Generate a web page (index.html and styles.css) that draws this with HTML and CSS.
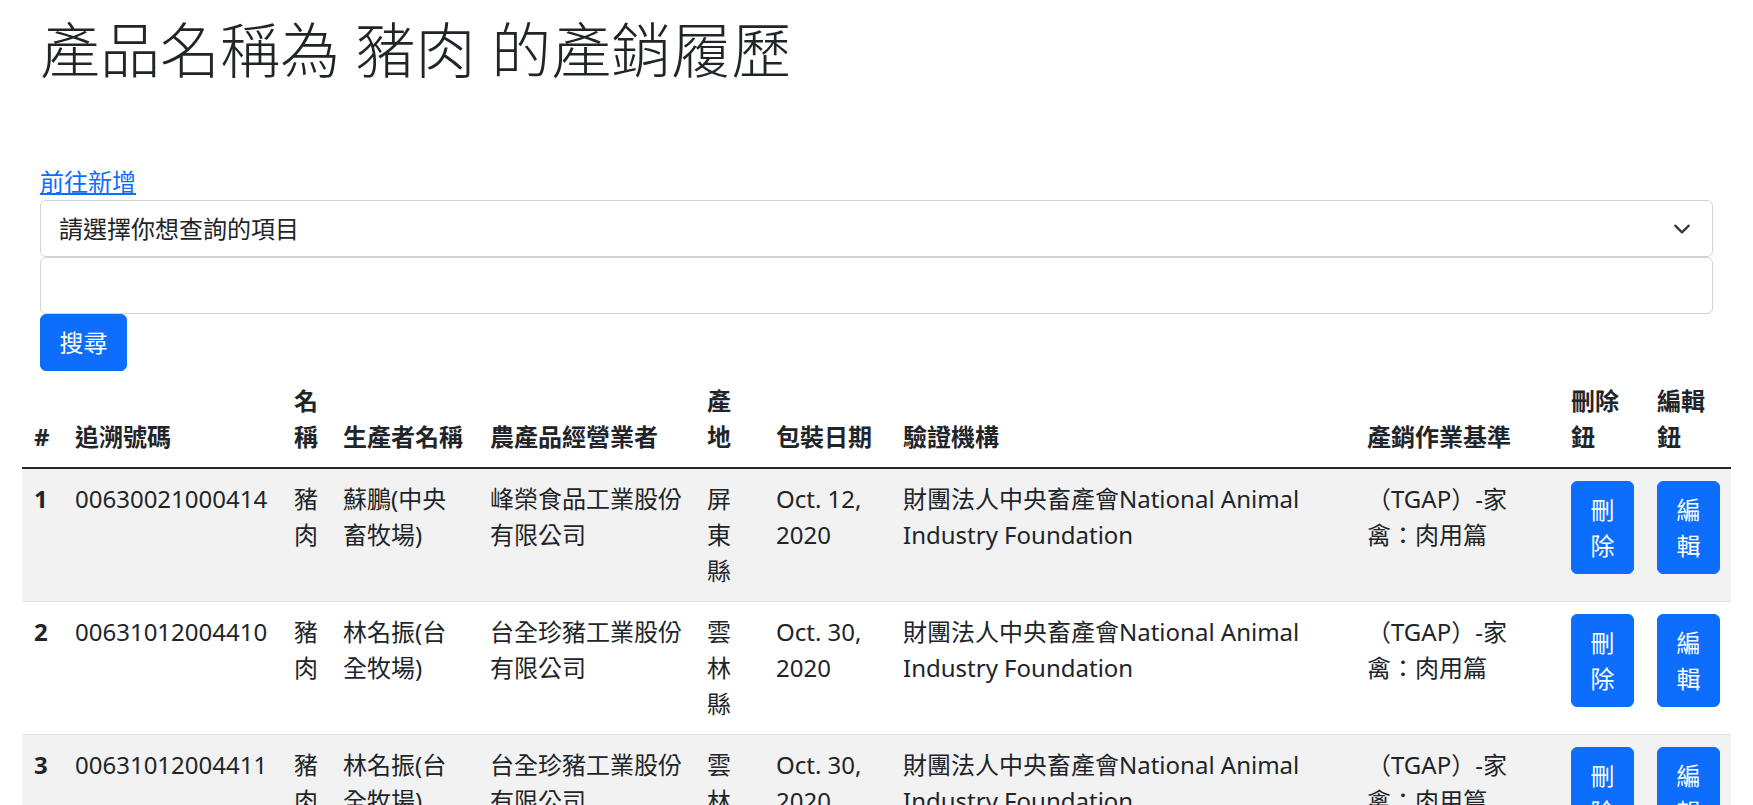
FILE: index.html
```html
<!DOCTYPE html>
<html lang="zh-Hant">
<head>
<meta charset="utf-8">
<title>產銷履歷</title>
<link rel="stylesheet" href="styles.css">
</head>
<body>
<div class="page">
  <div class="head-area">
    <h1 class="title">產品名稱為 豬肉 的產銷履歷</h1>
    <a class="add-link" href="#">前往新增</a>
    <select class="form-select">
      <option>請選擇你想查詢的項目</option>
    </select>
    <input class="form-input" type="text">
    <button class="btn btn-search" type="button">搜尋</button>
  </div>
  <table class="data-table">
    <colgroup>
      <col class="c-no"><col class="c-code"><col class="c-name"><col class="c-prod"><col class="c-biz"><col class="c-origin"><col class="c-date"><col class="c-cert"><col class="c-std"><col class="c-del"><col class="c-edit">
    </colgroup>
    <thead>
      <tr>
        <th>#</th><th>追溯號碼</th><th>名稱</th><th>生產者名稱</th><th>農產品經營業者</th><th>產地</th><th>包裝日期</th><th>驗證機構</th><th>產銷作業基準</th><th>刪除鈕</th><th>編輯鈕</th>
      </tr>
    </thead>
    <tbody>
      <tr class="odd">
        <th>1</th><td>00630021000414</td><td>豬肉</td><td>蘇鵬(中央畜牧場)</td><td>峰榮食品工業股份有限公司</td><td>屏東縣</td><td>Oct. 12, 2020</td><td>財團法人中央畜產會National Animal Industry Foundation</td><td>（TGAP）-家禽：肉用篇</td><td><button class="btn btn-row" type="button">刪除</button></td><td><button class="btn btn-row" type="button">編輯</button></td>
      </tr>
      <tr>
        <th>2</th><td>00631012004410</td><td>豬肉</td><td>林名振(台全牧場)</td><td>台全珍豬工業股份有限公司</td><td>雲林縣</td><td>Oct. 30, 2020</td><td>財團法人中央畜產會National Animal Industry Foundation</td><td>（TGAP）-家禽：肉用篇</td><td><button class="btn btn-row" type="button">刪除</button></td><td><button class="btn btn-row" type="button">編輯</button></td>
      </tr>
      <tr class="odd">
        <th>3</th><td>00631012004411</td><td>豬肉</td><td>林名振(台全牧場)</td><td>台全珍豬工業股份有限公司</td><td>雲林縣</td><td>Oct. 30, 2020</td><td>財團法人中央畜產會National Animal Industry Foundation</td><td>（TGAP）-家禽：肉用篇</td><td><button class="btn btn-row" type="button">刪除</button></td><td><button class="btn btn-row" type="button">編輯</button></td>
      </tr>
    </tbody>
  </table>
</div>
</body>
</html>
```

FILE: styles.css
```css
* { box-sizing: border-box; }

html, body {
  margin: 0;
  padding: 0;
  background: #fff;
}

body {
  font-family: "Noto Sans", "Noto Sans CJK TC", sans-serif;
  font-size: 24px;
  line-height: 36px;
  color: #212529;
}

.page {
  padding: 0 22px;
}

.head-area {
  padding: 0 18px;
  display: flex;
  flex-direction: column;
  align-items: stretch;
}

.title {
  margin: 15px 0 78px;
  font-size: 60px;
  line-height: 71px;
  font-weight: 300;
  color: #212529;
}

.add-link {
  align-self: flex-start;
  color: #0d6efd;
  text-decoration: underline;
  line-height: 36px;
}

.form-select,
.form-input {
  display: block;
  width: 100%;
  height: 57px;
  margin: 0;
  padding: 0 18px;
  font-family: inherit;
  font-size: 24px;
  color: #212529;
  background-color: #fff;
  border: 1px solid #ced4da;
  border-radius: 6px;
  appearance: none;
  -webkit-appearance: none;
  outline: none;
}

.form-select {
  padding-right: 54px;
  background-image: url("data:image/svg+xml,%3csvg xmlns='http://www.w3.org/2000/svg' viewBox='0 0 16 16'%3e%3cpath fill='none' stroke='%23343a40' stroke-linecap='round' stroke-linejoin='round' stroke-width='2' d='M2 5l6 6 6-6'/%3e%3c/svg%3e");
  background-repeat: no-repeat;
  background-position: right 18px center;
  background-size: 24px 18px;
}

.btn {
  font-family: inherit;
  font-size: 24px;
  line-height: 36px;
  color: #fff;
  background-color: #0d6efd;
  border: 1px solid #0d6efd;
  border-radius: 6px;
  cursor: pointer;
}

.btn-search {
  align-self: flex-start;
  height: 57px;
  padding: 0 18.5px;
}

.data-table {
  width: 1709px;
  table-layout: fixed;
  border-collapse: collapse;
  margin: 0;
}

.c-no { width: 41px; }
.c-code { width: 219px; }
.c-name { width: 49px; }
.c-prod { width: 147px; }
.c-biz { width: 217px; }
.c-origin { width: 69px; }
.c-date { width: 127px; }
.c-cert { width: 464px; }
.c-std { width: 204px; }
.c-del { width: 86px; }
.c-edit { width: 86px; }

.data-table th,
.data-table td {
  padding: 12px;
  text-align: left;
  vertical-align: top;
  border-bottom: 1px solid #dee2e6;
}

.data-table thead th {
  vertical-align: bottom;
  font-weight: 700;
  border-bottom: 2px solid #212529;
}

.data-table tbody th {
  font-weight: 700;
}

.data-table tbody td {
  font-weight: 400;
}

.data-table tr.odd th,
.data-table tr.odd td {
  background-color: #f2f2f2;
}

.btn-row {
  display: inline-block;
  width: 63px;
  padding: 9.5px 18.5px;
  text-align: center;
  word-break: break-all;
}
```
